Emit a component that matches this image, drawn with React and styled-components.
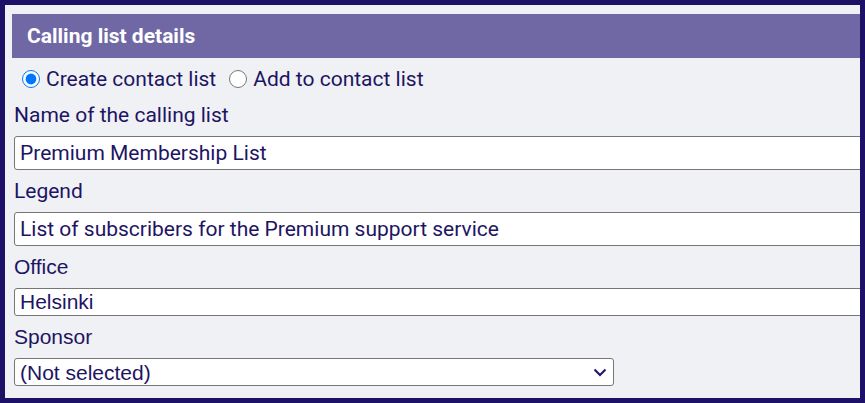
import React from "react";
import styled, { createGlobalStyle } from "styled-components";

const Global = createGlobalStyle`
  html, body { margin: 0; padding: 0; }
  body { font-family: Roboto, "Liberation Sans", Arial, sans-serif; }
`;

const Frame = styled.div`
  width: 865px;
  height: 403px;
  box-sizing: border-box;
  border: 5px solid #1c1166;
  background: #f0f1f5;
  overflow: hidden;
  padding: 9px 0 0 7px;
  color: #1d1563;
`;

const Header = styled.div`
  height: 44px;
  background: #6f68a5;
  color: #ffffff;
  font-family: Roboto, sans-serif;
  font-weight: 700;
  font-size: 21px;
  display: flex;
  align-items: center;
  padding-left: 15px;
`;

const Body = styled.div`
  padding-left: 2px;
  display: flex;
  flex-direction: column;
`;

const RadioRow = styled.div`
  margin-top: 7px;
  height: 28px;
  display: flex;
  align-items: center;
  font-size: 21px;
  line-height: 28px;
`;

const RadioLabel = styled.label`
  display: flex;
  align-items: center;
  margin-left: ${(p) => p.$offset}px;
`;

const Radio = styled.input`
  width: 18px;
  height: 18px;
  margin: 0 6px 0 0;
  accent-color: #0075ff;
`;

const Field = styled.div`
  margin-top: ${(p) => p.$gap}px;
  display: flex;
  flex-direction: column;
`;

const Label = styled.div`
  font-family: ${(p) => (p.$arial ? '"Liberation Sans", Arial, sans-serif' : "Roboto, sans-serif")};
  font-size: 21px;
  line-height: 28px;
  height: 28px;
  margin-bottom: 7px;
`;

const TextInput = styled.input`
  box-sizing: border-box;
  width: 900px;
  height: ${(p) => p.$h}px;
  border: 1px solid #767676;
  border-radius: 3px;
  background: #ffffff;
  padding: 0 5px;
  font-family: ${(p) => (p.$arial ? '"Liberation Sans", Arial, sans-serif' : "Roboto, sans-serif")};
  font-size: 21px;
  color: #1d1563;
  outline: none;
`;

const SelectWrap = styled.div`
  position: relative;
  width: 600px;
`;

const Select = styled.select`
  box-sizing: border-box;
  width: 600px;
  height: 28px;
  border: 1px solid #767676;
  border-radius: 3px;
  background: #ffffff;
  appearance: none;
  padding: 0 5px;
  font-family: "Liberation Sans", Arial, sans-serif;
  font-size: 21px;
  color: #1d1563;
  outline: none;
`;

const Chevron = styled.svg`
  position: absolute;
  right: 7px;
  top: 10px;
  pointer-events: none;
`;

export default function App() {
  return (
    <>
      <Global />
      <Frame>
        <Header>Calling list details</Header>
        <Body>
          <RadioRow>
            <RadioLabel $offset={8}>
              <Radio type="radio" name="mode" defaultChecked />
              Create contact list
            </RadioLabel>
            <RadioLabel $offset={13}>
              <Radio type="radio" name="mode" />
              Add to contact list
            </RadioLabel>
          </RadioRow>
          <Field $gap={8}>
            <Label>Name of the calling list</Label>
            <TextInput $h={34} defaultValue="Premium Membership List" />
          </Field>
          <Field $gap={7}>
            <Label>Legend</Label>
            <TextInput $h={34} defaultValue="List of subscribers for the Premium support service" />
          </Field>
          <Field $gap={7}>
            <Label $arial>Office</Label>
            <TextInput $h={28} $arial defaultValue="Helsinki" />
          </Field>
          <Field $gap={7}>
            <Label $arial>Sponsor</Label>
            <SelectWrap>
              <Select defaultValue="">
                <option value="">(Not selected)</option>
              </Select>
              <Chevron width="14" height="9" viewBox="0 0 14 9">
                <path d="M1.5 1.5 L7 7 L12.5 1.5" fill="none" stroke="#1d1563" strokeWidth="2" />
              </Chevron>
            </SelectWrap>
          </Field>
        </Body>
      </Frame>
    </>
  );
}
